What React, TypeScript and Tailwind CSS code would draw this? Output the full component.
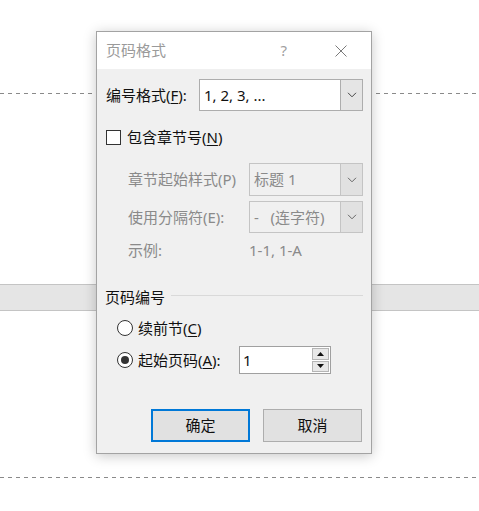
import React from "react";

const font = "font-['Noto_Sans','Noto_Sans_CJK_SC',sans-serif]";

function Chevron({ color = "#555" }: { color?: string }) {
  return (
    <svg width="10" height="6" viewBox="0 0 10 6">
      <path d="M1 0.8 L5 4.8 L9 0.8" fill="none" stroke={color} strokeWidth="1" />
    </svg>
  );
}

function Select({ text, disabled }: { text: string; disabled?: boolean }) {
  return (
    <div
      className={`flex h-full flex-1 border ${
        disabled ? "border-[#c4c4c4] bg-[#f0f0f0]" : "border-[#adadad] bg-white"
      }`}
    >
      <div
        className={`flex flex-1 items-center whitespace-pre pl-[4px] text-[15px] ${
          disabled ? "text-[#8a8a8a]" : "text-[#111]"
        }`}
      >
        {text}
      </div>
      <div
        className={`flex w-[22px] items-center justify-center border-l ${
          disabled ? "border-[#c4c4c4] bg-[#e1e1e1]" : "border-[#adadad] bg-[#e5e5e5]"
        }`}
      >
        <Chevron color={disabled ? "#666" : "#444"} />
      </div>
    </div>
  );
}

function Radio({ checked }: { checked?: boolean }) {
  return (
    <div className="flex h-[16px] w-[16px] items-center justify-center rounded-full border border-[#333] bg-white">
      {checked && <div className="h-[8px] w-[8px] rounded-full bg-[#333]" />}
    </div>
  );
}

export default function App() {
  return (
    <div className={`relative h-[511px] w-[479px] overflow-hidden bg-white ${font}`}>
      {/* page background */}
      <div className="flex flex-col">
        <div className="h-[93px]" />
        <div className="h-px bg-[repeating-linear-gradient(to_right,#8a8a8a_0_4px,transparent_4px_8px)]" />
        <div className="h-[190px]" />
        <div className="h-[27px] border-y border-[#c4c4c4] bg-[#e5e5e5]" />
        <div className="h-[166px]" />
        <div className="h-px bg-[repeating-linear-gradient(to_right,#8a8a8a_0_4px,transparent_4px_8px)]" />
      </div>

      {/* dialog */}
      <div className="absolute left-[96px] top-[31px] flex h-[423px] w-[276px] flex-col border border-[#a3a3a3] bg-[#f0f0f0] shadow-[0_2px_12px_rgba(0,0,0,0.22)]">
        {/* title bar */}
        <div className="flex h-[37px] items-center bg-white pl-[9px] text-[15px] text-[#9a9a9a]">
          <span className="flex-1">页码格式</span>
          <span className="mr-[48px] text-[15px] text-[#a0a0a0]">?</span>
          <svg width="12" height="12" viewBox="0 0 12 12" className="mr-[24px]">
            <path d="M0.5 0.5 L11.5 11.5 M11.5 0.5 L0.5 11.5" stroke="#7a7a7a" strokeWidth="1" />
          </svg>
        </div>

        {/* body */}
        <div className="flex flex-1 flex-col pl-[9px] pr-[8px] text-[15px] text-[#111]">
          <div className="mt-[10px] flex h-[32px] items-center">
            <span className="w-[93px]">
              编号格式(<span className="underline underline-offset-2">F</span>):
            </span>
            <Select text="1, 2, 3, ..." />
          </div>

          <div className="mt-[16px] flex h-[20px] items-center">
            <div className="h-[15px] w-[15px] border border-[#333] bg-white" />
            <span className="ml-[6px]">
              包含章节号(<span className="underline underline-offset-2">N</span>)
            </span>
          </div>

          <div className="mt-[16px] flex h-[33px] items-center pl-[22px]">
            <span className="w-[121px] text-[#8a8a8a]">章节起始样式(P)</span>
            <Select text="标题 1" disabled />
          </div>

          <div className="mt-[5px] flex h-[32px] items-center pl-[22px]">
            <span className="w-[121px] text-[#8a8a8a]">使用分隔符(E):</span>
            <Select text="-   (连字符)" disabled />
          </div>

          <div className="mt-[7px] flex h-[20px] items-center pl-[22px] text-[#8a8a8a]">
            <span className="w-[121px]">示例:</span>
            <span>1-1, 1-A</span>
          </div>

          <div className="mt-[27px] flex h-[20px] items-center">
            <span className="-ml-px">页码编号</span>
            <div className="ml-[6px] mt-[-3px] h-px flex-1 bg-[#d9d9d9]" />
          </div>

          <div className="mt-[11px] flex h-[20px] items-center pl-[11px]">
            <Radio />
            <span className="ml-[5px]">
              续前节(<span className="underline underline-offset-2">C</span>)
            </span>
          </div>

          <div className="mt-[8px] flex h-[28px] items-center pl-[11px]">
            <Radio checked />
            <span className="ml-[5px] w-[101px]">
              起始页码(<span className="underline underline-offset-2">A</span>):
            </span>
            <div className="flex h-[28px] w-[92px] border border-[#a0a0a0] bg-white">
              <div className="flex flex-1 items-center pl-[3px] text-[#111]">1</div>
              <div className="flex w-[19px] flex-col gap-px p-px">
                <div className="flex flex-1 items-center justify-center border border-[#b5b5b5] bg-[#e8e8e8]">
                  <svg width="7" height="4" viewBox="0 0 7 4">
                    <path d="M0 4 L3.5 0 L7 4 Z" fill="#111" />
                  </svg>
                </div>
                <div className="flex flex-1 items-center justify-center border border-[#b5b5b5] bg-[#e8e8e8]">
                  <svg width="7" height="4" viewBox="0 0 7 4">
                    <path d="M0 0 L3.5 4 L7 0 Z" fill="#111" />
                  </svg>
                </div>
              </div>
            </div>
          </div>

          <div className="mt-[35px] flex h-[33px] justify-end gap-[13px] pr-[1px]">
            <button className="flex w-[99px] items-center justify-center border-2 border-[#0078d7] bg-[#e1e1e1] text-[15px] text-[#111]">
              确定
            </button>
            <button className="flex w-[99px] items-center justify-center border border-[#adadad] bg-[#e1e1e1] text-[15px] text-[#111]">
              取消
            </button>
          </div>
        </div>
      </div>
    </div>
  );
}
